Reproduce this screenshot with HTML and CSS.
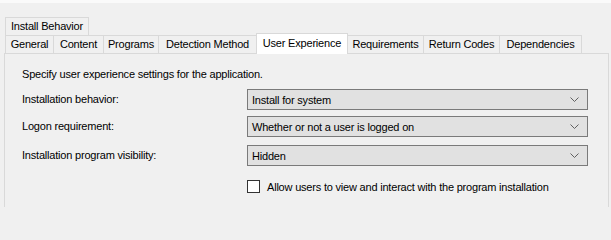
FILE: index.html
```html
<!DOCTYPE html>
<html>
<head>
<meta charset="utf-8">
<link rel="stylesheet" href="styles.css">
</head>
<body>
<div class="topstrip"></div>
<div class="tabs">
  <div class="row row1">
    <div class="tab t-install">Install Behavior</div>
  </div>
  <div class="row row2">
    <div class="tab w-general">General</div>
    <div class="tab w-content">Content</div>
    <div class="tab w-programs">Programs</div>
    <div class="tab w-detect">Detection Method</div>
    <div class="tab selected w-ux">User Experience</div>
    <div class="tab w-req">Requirements</div>
    <div class="tab w-ret">Return Codes</div>
    <div class="tab w-dep">Dependencies</div>
  </div>
</div>
<div class="panel">
  <div class="desc">Specify user experience settings for the application.</div>
  <div class="form">
    <div class="label">Installation behavior:</div>
    <div class="combo"><span>Install for system</span><svg class="chev" width="9" height="5" viewBox="0 0 9 5"><polyline points="0.5,0.5 4.5,4.5 8.5,0.5" fill="none" stroke="#606060" stroke-width="1"/></svg></div>
    <div class="label r2">Logon requirement:</div>
    <div class="combo r2"><span>Whether or not a user is logged on</span><svg class="chev" width="9" height="5" viewBox="0 0 9 5"><polyline points="0.5,0.5 4.5,4.5 8.5,0.5" fill="none" stroke="#606060" stroke-width="1"/></svg></div>
    <div class="label r3">Installation program visibility:</div>
    <div class="combo r3"><span>Hidden</span><svg class="chev" width="9" height="5" viewBox="0 0 9 5"><polyline points="0.5,0.5 4.5,4.5 8.5,0.5" fill="none" stroke="#606060" stroke-width="1"/></svg></div>
    <div class="check r4"><span class="box"></span><span>Allow users to view and interact with the program installation</span></div>
  </div>
</div>
</body>
</html>
```

FILE: styles.css
```css
html, body {
  margin: 0;
  padding: 0;
}
body {
  width: 611px;
  height: 207px;
  overflow: hidden;
  background: #f0f0f0;
  font-family: "Liberation Sans", Arial, sans-serif;
  font-size: 11px;
  letter-spacing: -0.2px;
  color: #000;
}
.topstrip {
  height: 3px;
  background: #fafafa;
}
.tabs {
  padding-top: 14px;
  padding-left: 5px;
}
.row {
  display: flex;
  align-items: flex-start;
}
.row1 {
  height: 16px;
}
.tab {
  box-sizing: border-box;
  border: 1px solid #d9d9d9;
  border-bottom: none;
  background: #f0f0f0;
  text-align: center;
  line-height: 15px;
  white-space: nowrap;
  margin-right: -1px;
}
.t-install {
  width: 84px;
  height: 18px;
  padding-top: 1px;
}
.row2 {
  height: 20px;
  position: relative;
  z-index: 2;
}
.row2 .tab {
  margin-top: 2px;
  height: 18px;
  padding-top: 1px;
}
.row2 .tab.selected {
  margin-top: 0;
  height: 21px;
  background: #fff;
  padding-top: 2px;
}
.w-general { width: 49px; }
.w-content { width: 51px; }
.w-programs { width: 56px; }
.w-detect { width: 99px; }
.w-ux { width: 92px; }
.w-req { width: 77px; }
.w-ret { width: 77px; }
.w-dep { width: 83px; }
.panel {
  box-sizing: border-box;
  margin-left: 4px;
  width: 605px;
  height: 154px;
  border: 1px solid #d9d9d9;
  border-bottom: none;
  padding: 14px 0 0 17px;
}
.desc {
  line-height: 13px;
  height: 13px;
}
.form {
  display: grid;
  grid-template-columns: 225px 341px;
  margin-top: 8px;
  align-items: center;
}
.label {
  line-height: 13px;
}
.combo {
  box-sizing: border-box;
  height: 21px;
  border: 1px solid #7a7a7a;
  background: #e1e1e1;
  display: flex;
  align-items: center;
  justify-content: space-between;
  padding: 0 8px 0 4px;
}
.chev {
  display: block;
}
.r2 { margin-top: 6px; }
.r3 { margin-top: 8px; }
.check {
  grid-column: 2;
  margin-top: 14px;
  display: flex;
  align-items: center;
  gap: 7px;
}
.box {
  box-sizing: border-box;
  width: 13px;
  height: 13px;
  border: 1px solid #333;
  background: #fff;
}
```
